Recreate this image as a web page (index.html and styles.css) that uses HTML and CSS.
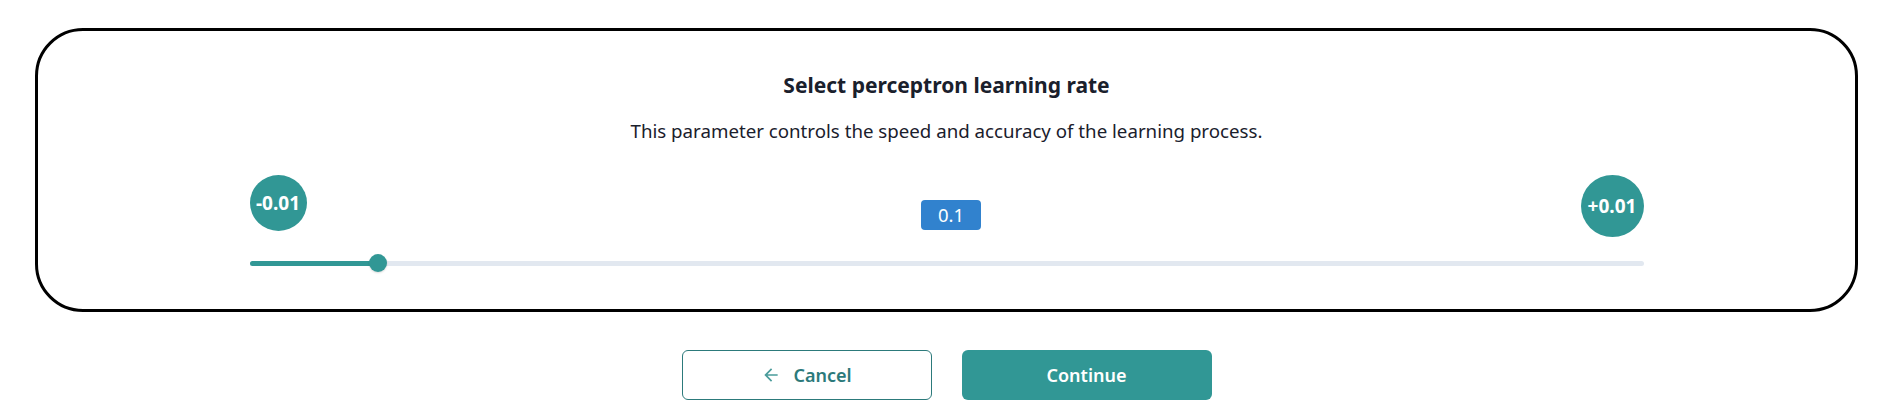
FILE: index.html
```
<!DOCTYPE html>
<html lang="en">
<head>
<meta charset="utf-8">
<title>Select perceptron learning rate</title>
<link rel="stylesheet" href="styles.css">
</head>
<body>
<div class="page">
  <section class="card">
    <h2 class="title">Select perceptron learning rate</h2>
    <p class="subtitle">This parameter controls the speed and accuracy of the learning process.</p>
    <div class="slider">
      <div class="slider-top">
        <button class="step step-minus">-0.01</button>
        <div class="value-wrap"><span class="value">0.1</span></div>
        <button class="step step-plus">+0.01</button>
      </div>
      <div class="track-row">
        <div class="track"><div class="fill" style="width: 9.2%"></div></div>
        <div class="thumb" style="left: 9.2%"></div>
      </div>
    </div>
  </section>
  <div class="actions">
    <button class="btn btn-outline">
      <svg class="arrow" viewBox="0 0 24 24" width="20" height="20" aria-hidden="true"><path d="M20 11H7.83l5.59-5.59L12 4l-8 8 8 8 1.41-1.41L7.83 13H20v-2z" fill="currentColor"/></svg>
      <span>Cancel</span>
    </button>
    <button class="btn btn-solid">Continue</button>
  </div>
</div>
</body>
</html>
```
FILE: styles.css
```
* { box-sizing: border-box; }
html, body { margin: 0; padding: 0; background: #ffffff; }
body {
  font-family: "Noto Sans", "Open Sans", Arial, sans-serif;
  color: #1a202c;
}
.page {
  padding: 28px 35px 0 35px;
}
.card {
  border: 3px solid #000000;
  border-radius: 48px;
  height: 284px;
  padding-top: 39px;
  display: flex;
  flex-direction: column;
  align-items: center;
}
.title {
  margin: 0;
  font-size: 21px;
  line-height: 30px;
  font-weight: 700;
  color: #1a202c;
}
.subtitle {
  margin: 18px 0 0 0;
  font-size: 18.7px;
  line-height: 26px;
  color: #1a202c;
}
.slider {
  width: 1394px;
  margin-top: 31px;
}
.slider-top {
  display: grid;
  grid-template-columns: auto 1fr auto;
  align-items: start;
  height: 62px;
}
.step {
  border: 0;
  margin: 0;
  padding: 0;
  background: #319795;
  color: #ffffff;
  font-family: inherit;
  font-weight: 700;
  font-size: 19px;
  border-radius: 50%;
  display: flex;
  align-items: center;
  justify-content: center;
}
.step-minus { width: 57px; height: 56px; }
.step-plus { width: 63px; height: 62px; }
.value-wrap {
  display: flex;
  justify-content: center;
  padding-left: 15px;
  padding-top: 25px;
}
.value {
  background: #3182ce;
  color: #ffffff;
  font-size: 18.5px;
  line-height: 30px;
  height: 30px;
  width: 60px;
  text-align: center;
  border-radius: 4px;
}
.track-row {
  position: relative;
  height: 18px;
  margin-top: 17px;
  display: flex;
  align-items: center;
}
.track {
  width: 100%;
  height: 5px;
  border-radius: 3px;
  background: #e2e8f0;
  overflow: hidden;
}
.fill {
  height: 100%;
  background: #319795;
}
.thumb {
  position: absolute;
  top: 0;
  width: 18px;
  height: 18px;
  margin-left: -9px;
  border-radius: 50%;
  background: #319795;
  box-shadow: 0 1px 2px rgba(0, 0, 0, 0.15);
}
.actions {
  display: flex;
  justify-content: center;
  gap: 30px;
  margin-top: 38px;
}
.btn {
  width: 250px;
  height: 50px;
  border-radius: 6px;
  font-family: inherit;
  font-size: 18px;
  font-weight: 600;
  display: flex;
  align-items: center;
  justify-content: center;
  gap: 12px;
  cursor: pointer;
  margin: 0;
}
.btn-outline {
  background: #ffffff;
  border: 1px solid #2c7a7b;
  color: #2c7a7b;
}
.arrow { color: #4a9c9b; }
.btn-solid {
  background: #319795;
  border: 0;
  color: #ffffff;
}
```
